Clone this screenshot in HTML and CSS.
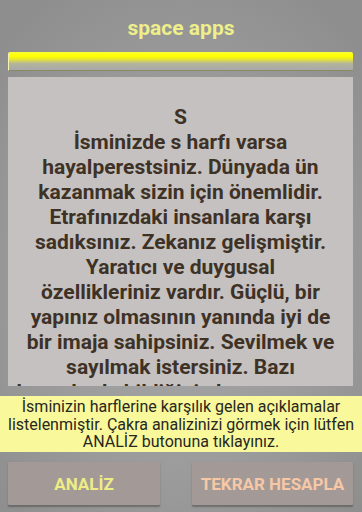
FILE: index.html
```html
<!DOCTYPE html>
<html lang="tr">
<head>
<meta charset="utf-8">
<title>space apps</title>
<link rel="stylesheet" href="styles.css">
</head>
<body>
<div class="screen">
  <header class="title">space apps</header>
  <div class="input"></div>
  <div class="content">
    <p class="desc">S<br>İsminizde s harfı varsa<br>hayalperestsiniz. Dünyada ün<br>kazanmak sizin için önemlidir.<br>Etrafınızdaki insanlara karşı<br>sadıksınız. Zekanız gelişmiştir.<br>Yaratıcı ve duygusal<br>özellikleriniz vardır. Güçlü, bir<br>yapınız olmasının yanında iyi de<br>bir imaja sahipsiniz. Sevilmek ve<br>sayılmak istersiniz. Bazı<br>durumlarda bildiğinizden şaşmazsınız.</p>
  </div>
  <div class="info">İsminizin harflerine karşılık gelen açıklamalar listelenmiştir. Çakra analizinizi görmek için lütfen ANALİZ butonuna tıklayınız.</div>
  <div class="buttons">
    <button class="btn btn-analiz">ANALİZ</button>
    <button class="btn btn-tekrar">TEKRAR HESAPLA</button>
  </div>
</div>
</body>
</html>
```

FILE: styles.css
```css
html, body {
  margin: 0;
  padding: 0;
}
body {
  width: 362px;
  height: 512px;
  overflow: hidden;
  font-family: Roboto, "Noto Sans", "Liberation Sans", sans-serif;
}
.screen {
  width: 362px;
  height: 512px;
  display: flex;
  flex-direction: column;
  background: radial-gradient(ellipse 70% 65% at 50% 55%, #a6a6a6 0%, #9c9c9c 55%, #8e8e8e 100%);
}
.title {
  padding-top: 16px;
  height: 24px;
  line-height: 24px;
  margin-bottom: 12px;
  text-align: center;
  font-size: 21px;
  font-weight: 700;
  color: #eeee8a;
}
.input {
  margin: 0 9px 6px 8px;
  height: 18px;
  border-radius: 2px 2px 0 0;
  border-left: 1px solid #f4f4b0;
  border-bottom: 1px solid #8a8a62;
  background: linear-gradient(#ffff30 0%, #ffff00 24%, #e8e830 40%, #b4b49a 64%, #a9a9a9 100%);
}
.content {
  margin: 0 9px 10px 8px;
  height: 281px;
  padding: 28px 2px 0;
  overflow: hidden;
  background: #c5c1c0;
}
.desc {
  margin: 0;
  text-align: center;
  white-space: nowrap;
  font-size: 21px;
  line-height: 25px;
  font-weight: 700;
  color: #3e3226;
}
.info {
  height: 54px;
  padding: 2px 4px 0;
  background: #f9f99c;
  text-align: center;
  font-size: 16px;
  line-height: 17.5px;
  color: #27271e;
}
.buttons {
  margin-top: 10px;
  padding: 0 9px 0 8px;
  display: grid;
  grid-template-columns: 152px 161px;
  column-gap: 32px;
}
.btn {
  height: 43px;
  border: none;
  border-radius: 1px;
  background: #a39a98;
  box-shadow: 0 1.5px 1.5px rgba(60, 60, 60, 0.45);
  font-family: Roboto, "Noto Sans", "Liberation Sans", sans-serif;
  font-size: 17px;
  font-weight: 700;
  padding: 0;
}
.btn-analiz {
  color: #eeee84;
}
.btn-tekrar {
  color: #f6c8a6;
}
```
